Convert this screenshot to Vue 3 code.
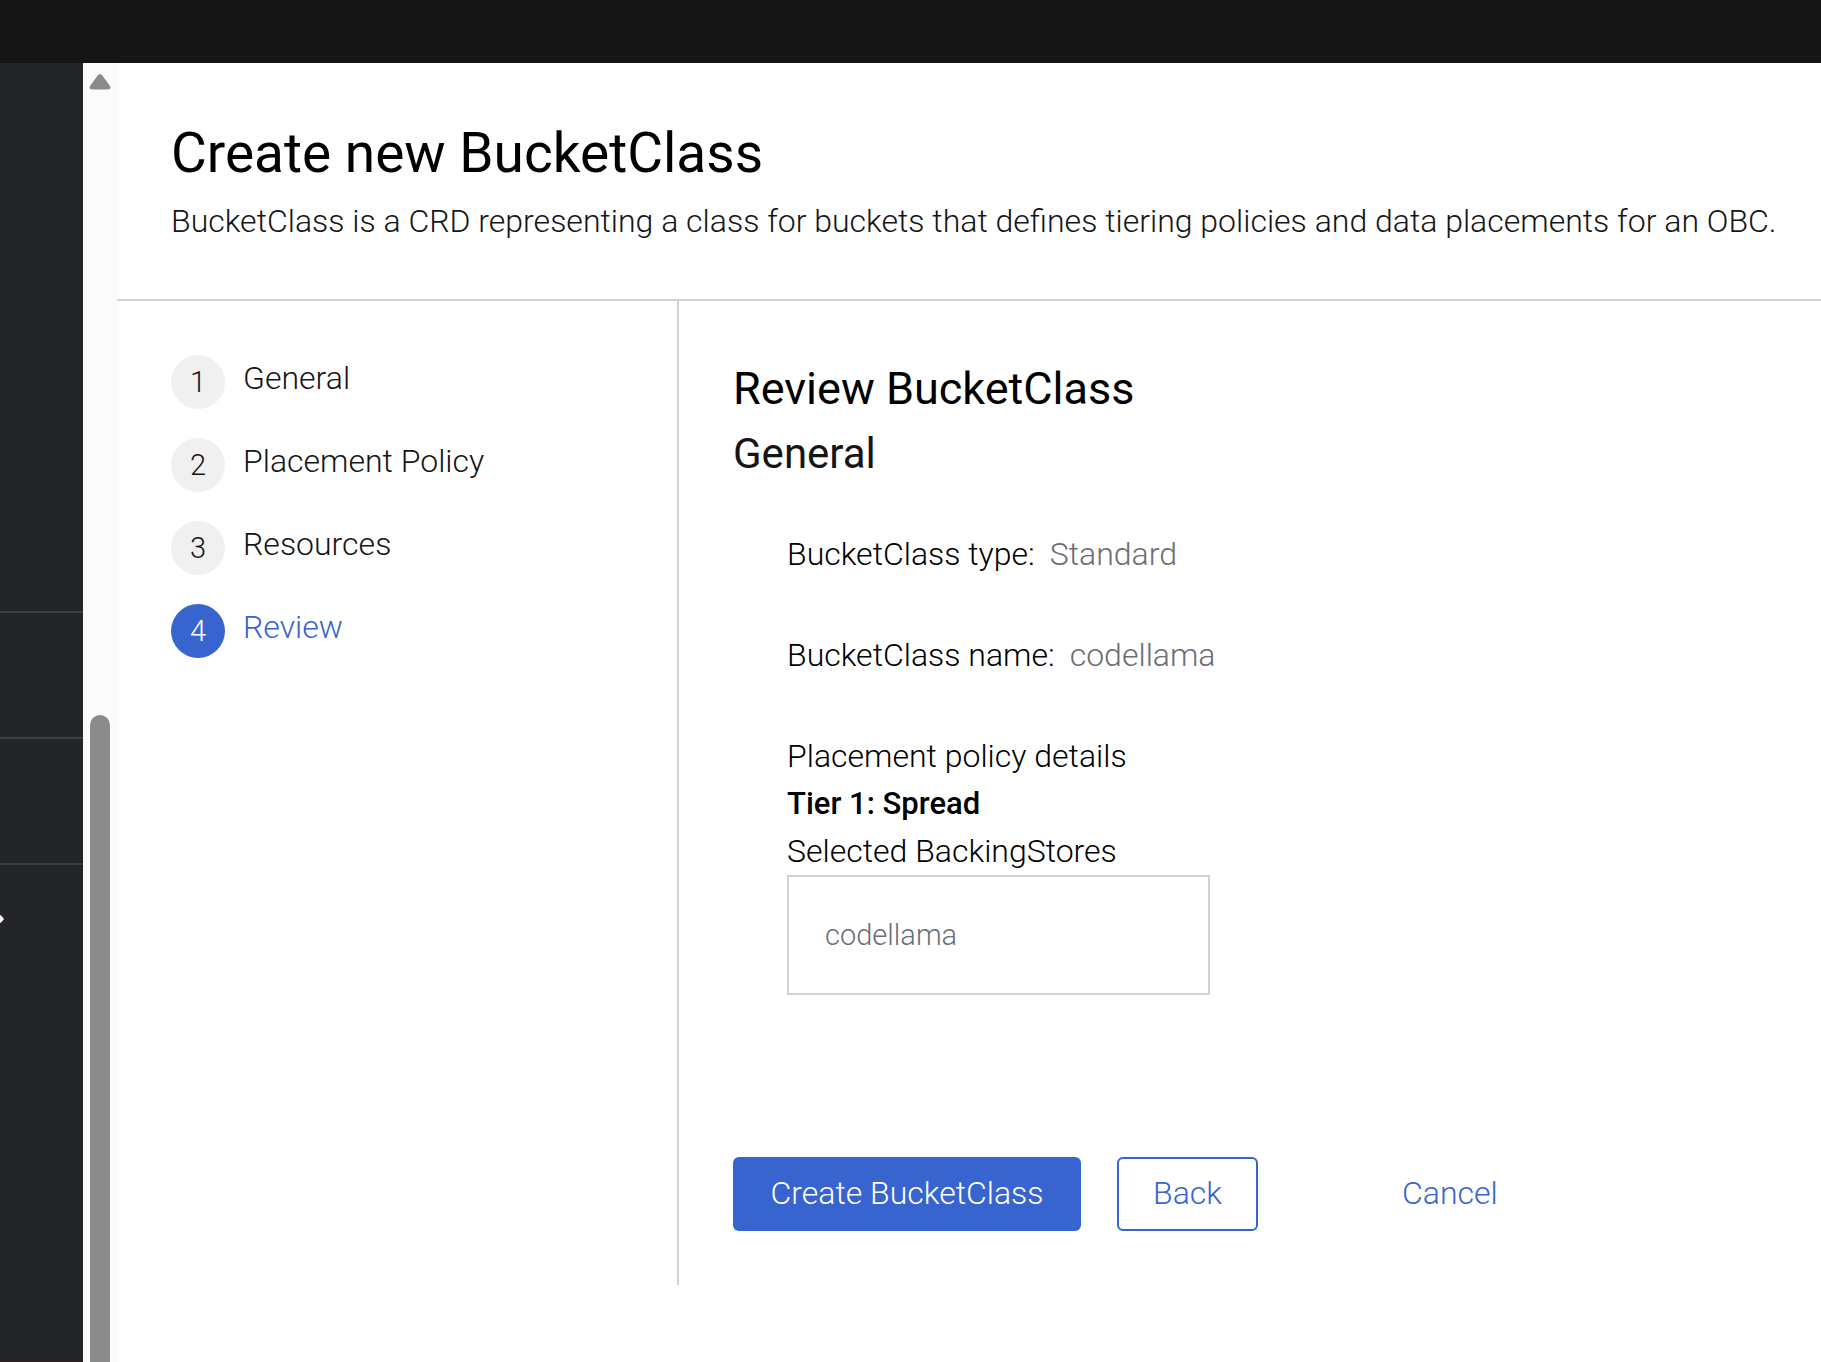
<script setup>
const steps = ['General', 'Placement Policy', 'Resources', 'Review']
const current = 3
const details = [
  { label: 'BucketClass type:', value: 'Standard' },
  { label: 'BucketClass name:', value: 'codellama' },
]
const backingStores = ['codellama']
</script>

<template>
  <div class="console">
    <header class="masthead"></header>
    <div class="body">
      <aside class="sidebar">
        <div class="section first"></div>
        <div class="section"></div>
        <div class="section"></div>
        <div class="section last">
          <svg class="chevron" viewBox="0 0 4 10" width="4" height="10" aria-hidden="true">
            <path d="M0 1 Q1 1 4 5 Q1 9 0 9 Z" fill="#fff" />
          </svg>
        </div>
      </aside>
      <div class="scrollbar" aria-hidden="true">
        <svg class="arrow" viewBox="0 0 22 16" width="22" height="16">
          <path d="M8.6 1.6 Q11 -1.4 13.4 1.6 L21 12 Q22.4 15.4 19 15.6 H3 Q-.4 15.4 1 12 Z" fill="#8b8b8b" />
        </svg>
        <div class="thumb"></div>
      </div>
      <main class="page">
        <header class="heading">
          <h1>Create new BucketClass</h1>
          <p>BucketClass is a CRD representing a class for buckets that defines tiering policies and data placements for an OBC.</p>
        </header>
        <div class="wizard">
          <nav class="steps" aria-label="Wizard steps">
            <ol>
              <li v-for="(step, i) in steps" :key="step">
                <button type="button" class="step" :class="{ current: i === current }">
                  <span class="number">{{ i + 1 }}</span>
                  <span class="label">{{ step }}</span>
                </button>
              </li>
            </ol>
          </nav>
          <section class="content">
            <h2>Review BucketClass</h2>
            <h3>General</h3>
            <div class="details">
              <p v-for="d in details" :key="d.label" class="detail">
                <span>{{ d.label }}</span>
                <span class="value">{{ d.value }}</span>
              </p>
              <div class="policy">
                <p>Placement policy details</p>
                <p class="tier">Tier 1: Spread</p>
                <p>Selected BackingStores</p>
                <ul class="stores">
                  <li v-for="s in backingStores" :key="s">{{ s }}</li>
                </ul>
              </div>
            </div>
            <footer class="actions">
              <button type="button" class="btn primary">Create BucketClass</button>
              <button type="button" class="btn secondary">Back</button>
              <button type="button" class="btn link">Cancel</button>
            </footer>
          </section>
        </div>
      </main>
    </div>
  </div>
</template>

<style>
body {
  margin: 0;
  background: #fff;
}
</style>

<style scoped>
.console {
  display: flex;
  flex-direction: column;
  min-height: 100vh;
  font-family: Roboto, sans-serif;
  font-size: 32px;
  font-weight: 300;
  line-height: 48px;
  color: #151515;
}
.masthead {
  height: 63px;
  background: #151515;
}
.body {
  flex: 1;
  display: flex;
}
h1, h2, h3, p, ol, ul {
  margin: 0;
  padding: 0;
  font-weight: inherit;
}
ol, ul {
  list-style: none;
}
button {
  font: inherit;
  color: inherit;
  background: none;
  border: 0;
  padding: 0;
  cursor: pointer;
}

.sidebar {
  flex: none;
  width: 83px;
  display: flex;
  flex-direction: column;
  background: #242529;
}
.section {
  height: 124px;
  border-bottom: 2px solid #3f4044;
}
.section.first {
  height: 548px;
}
.section.last {
  flex: 1;
  border-bottom: 1px solid #292024;
  display: flex;
  align-items: flex-start;
}
.chevron {
  display: block;
  margin-top: 49px;
}
.scrollbar {
  flex: none;
  width: 34px;
  display: flex;
  flex-direction: column;
  align-items: center;
  background: #fbfbfb;
}
.arrow {
  display: block;
  margin-top: 11px;
}
.thumb {
  width: 20px;
  flex: 1;
  margin-top: 625px;
  border-radius: 10px 10px 0 0;
  background: #8b8b8b;
}

.page {
  flex: 1;
  min-width: 0;
}
.heading {
  padding: 56px 40px 54px 54px;
  border-bottom: 2px solid #d2d2d2;
}
h1 {
  margin-bottom: 10px;
  font-size: 55px;
  font-weight: 400;
  line-height: 68px;
  color: #000;
}
.wizard {
  display: flex;
}
.steps {
  flex: none;
  width: 562px;
  padding: 54px 0 54px 54px;
  box-sizing: border-box;
  border-right: 2px solid #d2d2d2;
}
.steps ol {
  display: flex;
  flex-direction: column;
  gap: 29px;
}
.steps li {
  display: flex;
}
.step {
  display: flex;
  align-items: flex-start;
  gap: 18px;
}
.number {
  width: 54px;
  border-radius: 50%;
  background: #f0f0f0;
  font-size: 29px;
  line-height: 54px;
  text-align: center;
}
.label {
  line-height: 46px;
}
.current .number {
  background: #3864cf;
  color: #fff;
}
.current .label {
  color: #3864cf;
}

.content {
  flex: 1;
  padding: 54px;
  color: #000;
}
h2 {
  font-size: 45px;
  font-weight: 400;
  line-height: 68px;
}
h3 {
  font-size: 42px;
  font-weight: 400;
  line-height: 62px;
  color: #151515;
}
.details {
  display: flex;
  flex-direction: column;
  gap: 53px;
  width: 423px;
  margin: 45px 0 162px 54px;
}
.detail {
  display: flex;
  gap: 15px;
  white-space: nowrap;
}
.value {
  color: #6a6e73;
}
.tier {
  font-size: 31px;
  font-weight: 500;
  line-height: 47px;
}
.stores {
  padding: 34px 36px;
  border: 2px solid #d2d2d2;
  font-size: 29px;
  color: #6a6e73;
}
.actions {
  display: flex;
}
.btn {
  box-sizing: border-box;
  height: 74px;
  padding: 0 34px 2px;
  border: 2px solid transparent;
  border-radius: 6px;
  color: #3864cf;
}
.primary {
  width: 348px;
  background: #3864cf;
  color: #fff;
}
.secondary {
  width: 141px;
  margin-left: 36px;
  border-color: #3864cf;
}
.link {
  margin-left: 108px;
}
</style>
